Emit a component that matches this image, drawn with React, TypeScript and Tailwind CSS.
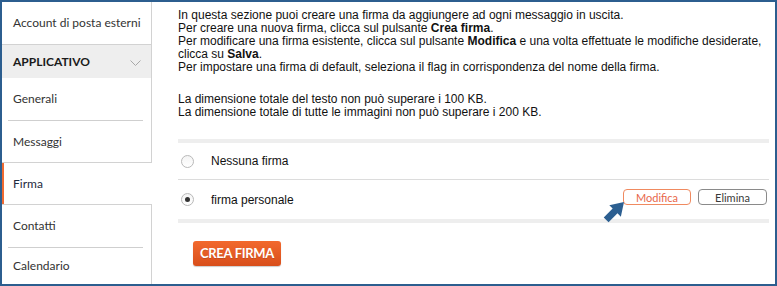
import React from 'react';

function Radio({ checked }: { checked?: boolean }) {
  return (
    <span className="w-[13px] h-[13px] rounded-full border border-[#b9b9b9] bg-gradient-to-b from-[#f4f4f4] to-white flex items-center justify-center shrink-0">
      {checked && <span className="w-[5px] h-[5px] rounded-full bg-[#333]" />}
    </span>
  );
}

function Arrow() {
  return (
    <svg className="absolute left-[-20px] top-[13px] w-[21px] h-[21px]" viewBox="0 0 20 20">
      <polygon
        points="20,0 17,14 13.8,10.8 5.3,19.3 0.7,14.7 9.2,6.2 6,3"
        fill="#2c5f91"
      />
    </svg>
  );
}

export default function App() {
  return (
    <div className="w-[777px] h-[286px] border-2 border-[#2c5e8f] bg-white flex overflow-hidden font-['Lato',sans-serif]">
      {/* sidebar */}
      <aside className="w-[150px] shrink-0 flex flex-col text-[12px] text-[#333] whitespace-nowrap">
        <div className="h-[43px] border-b border-r border-[#d2d2d2] flex items-center pl-[11px]">
          Account di posta esterni
        </div>
        <div className="h-[33px] bg-[#eeeeee] border-r border-[#d2d2d2] flex items-center justify-between pl-[11px] pr-[10px]">
          <span className="font-bold text-[12px] text-[#1b1b1b]">APPLICATIVO</span>
          <svg width="11" height="6" viewBox="0 0 11 6" className="mt-[2px]">
            <polyline points="0.5,0.5 5.5,5.5 10.5,0.5" fill="none" stroke="#a8a8a8" strokeWidth="1" />
          </svg>
        </div>
        <div className="border-r border-[#d2d2d2]">
          <div className="h-[42px] flex items-center pl-[11px]">Generali</div>
          <div className="h-px bg-[#cfcfcf] ml-[6px] mr-[8px]" />
        </div>
        <div className="h-[42px] border-b border-r border-[#d2d2d2] flex items-center pl-[11px]">Messaggi</div>
        <div className="h-[41px] border-l-2 border-[#ef6a32] flex items-center pl-[9px] text-[#1e2a40]">Firma</div>
        <div className="border-t border-r border-[#d2d2d2]">
          <div className="h-[42px] flex items-center pl-[11px]">Contatti</div>
          <div className="h-px bg-[#cfcfcf] ml-[6px] mr-[8px]" />
        </div>
        <div className="flex-1 border-r border-[#d2d2d2] flex items-center pl-[11px]">Calendario</div>
      </aside>

      {/* content */}
      <main className="flex-1 pl-[26px] pr-[6px] pt-[7px] flex flex-col">
        <div className="font-['Liberation_Sans',Arial,sans-serif] text-[12px] leading-[13px] text-[#111]">
          <p>
            In questa sezione puoi creare una firma da aggiungere ad ogni messaggio in uscita.
            <br />
            Per creare una nuova firma, clicca sul pulsante <b>Crea firma</b>.
            <br />
            Per modificare una firma esistente, clicca sul pulsante <b>Modifica</b> e una volta effettuate le modifiche desiderate,
            <br />
            clicca su <b>Salva</b>.
            <br />
            Per impostare una firma di default, seleziona il flag in corrispondenza del nome della firma.
          </p>
          <p className="mt-[19px]">
            La dimensione totale del testo non può superare i 100 KB.
            <br />
            La dimensione totale di tutte le immagini non può superare i 200 KB.
          </p>
        </div>

        <div className="mt-[20px] h-[4px] bg-[#eeeeee]" />
        <div className="h-[37px] border-b border-[#dcdcdc] flex items-center pl-[3px] gap-[17px] font-['Liberation_Sans',Arial,sans-serif] text-[12px] text-[#111]">
          <Radio />
          <span>Nessuna firma</span>
        </div>
        <div className="h-[39px] flex items-center justify-between pl-[3px] pr-[2px] font-['Liberation_Sans',Arial,sans-serif] text-[12px] text-[#111]">
          <div className="flex items-center gap-[17px]">
            <Radio checked />
            <span>firma personale</span>
          </div>
          <div className="flex items-center gap-[7px] mb-[5px] font-['Lato',sans-serif] text-[11px]">
            <div className="relative">
              <button className="w-[68px] h-[16px] rounded-[4px] border border-[#f08a60] text-[#e8664a] bg-white flex items-center justify-center leading-none">
                Modifica
              </button>
              <Arrow />
            </div>
            <button className="w-[69px] h-[16px] rounded-[4px] border border-[#8a8a8a] text-[#3a3a3a] bg-white flex items-center justify-center leading-none">
              Elimina
            </button>
          </div>
        </div>
        <div className="h-[4px] bg-[#eeeeee]" />

        <div className="mt-[17px] pl-[15px]">
          <button className="w-[88px] h-[25px] rounded-[3px] bg-gradient-to-b from-[#f2692d] to-[#d84e1b] text-white font-bold text-[13px] tracking-[-0.3px] shadow-[0_1px_1px_rgba(0,0,0,0.2)] [text-shadow:0_1px_0_rgba(0,0,0,0.15)]">
            CREA FIRMA
          </button>
        </div>
      </main>
    </div>
  );
}
